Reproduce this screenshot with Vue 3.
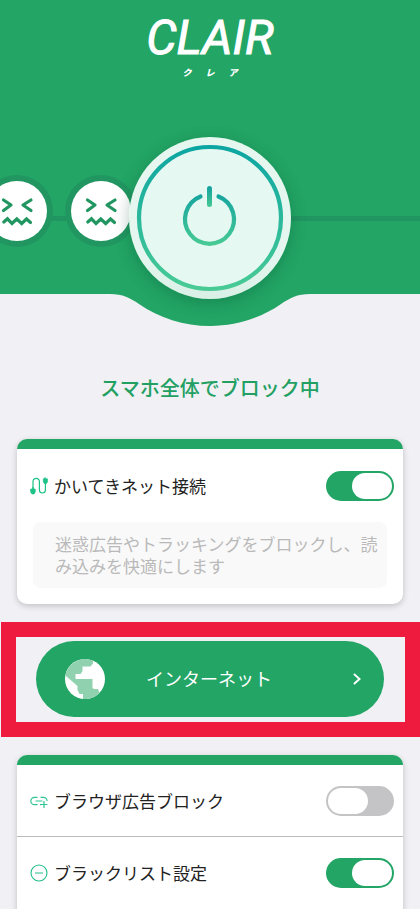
<script setup>
import { ref } from 'vue'

const comfort = ref(true)
const browserBlock = ref(false)
const blacklist = ref(true)
const kana = ['ク', 'レ', 'ア']
</script>

<template>
  <main class="screen">
    <header class="hero">
      <h1 class="logo">CLAIR</h1>
      <p class="kana"><span v-for="k in kana" :key="k">{{ k }}</span></p>

      <div class="stage">
        <div class="track"></div>
        <div class="faces">
          <svg v-for="n in 2" :key="n" class="face" viewBox="0 0 72 72" aria-hidden="true">
            <circle cx="36" cy="36" r="36" fill="#219661" />
            <circle cx="36" cy="36" r="30" fill="#fff" />
            <g fill="none" stroke="#219661" stroke-width="3.200" stroke-linecap="round" stroke-linejoin="round">
              <path d="M22.500 25l7.500 5-7.500 5.500M50 25l-8 5 8 5.500" />
              <path d="M22.800 47L26.500 43.800 31 48.500 35.800 44 40.700 48.500 45.500 44 49.500 47.500" stroke-linejoin="miter" />
            </g>
          </svg>
        </div>
        <button class="power" type="button" aria-label="電源">
          <svg viewBox="0 0 162 162" aria-hidden="true">
            <defs>
              <linearGradient id="ring" gradientUnits="userSpaceOnUse" x1="81" y1="8" x2="81" y2="154">
                <stop offset="0" stop-color="#0ba5a2" />
                <stop offset="1" stop-color="#4acb95" />
              </linearGradient>
              <linearGradient id="glyph" gradientUnits="userSpaceOnUse" x1="81" y1="55" x2="81" y2="108">
                <stop offset="0" stop-color="#14a3a0" />
                <stop offset="1" stop-color="#48ca94" />
              </linearGradient>
              <linearGradient id="bar" gradientUnits="userSpaceOnUse" x1="81" y1="50" x2="81" y2="70">
                <stop offset="0" stop-color="#14a3a0" />
                <stop offset="1" stop-color="#48c894" />
              </linearGradient>
            </defs>
            <circle cx="81" cy="81" r="71" fill="#e6f8f2" stroke="url(#ring)" stroke-width="4.200" />
            <path d="M71.500 59.500a24.500 24.500 0 1 0 18 0" fill="none" stroke="url(#glyph)" stroke-width="4.200" stroke-linecap="round" />
            <rect x="78" y="49" width="5" height="21" rx="2.500" fill="url(#bar)" />
          </svg>
        </button>
      </div>
    </header>

    <svg class="bump" viewBox="0 0 210 33" aria-hidden="true">
      <path d="M0 0V1H5C18 1 25 5 34 11C54 25 79 33 105 33C131 33 156 25 176 11C185 5 192 1 205 1H210V0Z" fill="#22a565" />
    </svg>

    <h2 class="status">スマホ全体でブロック中</h2>

    <section class="card">
      <div class="row">
        <svg class="icon" viewBox="0 0 18 18" fill="none" stroke="#1cc286" aria-hidden="true">
          <path d="M3 12V4.500a3.200 3.200 0 0 1 6.400 0V13a3 3 0 0 0 6 0V5" stroke-width="1.200" />
          <path d="M2.500 10.500h1v1.500h1.800v3l-1.200 2h-2.200l-1.300-2v-3h1.900zM14.500 .8h1v1h2v3.200l-1 1.500h-2.200l-1-1.500V1.800h1.200z" fill="#1cc286" stroke-width=".6" />
        </svg>
        <label for="comfort">かいてきネット接続</label>
        <input id="comfort" v-model="comfort" class="switch" type="checkbox" role="switch" />
      </div>
      <p class="note">迷惑広告やトラッキングをブロックし、読み込みを快適にします</p>
    </section>

    <div class="highlight">
      <button class="internet" type="button">
        <svg class="globe" viewBox="0 0 40 40" aria-hidden="true">
          <circle cx="20" cy="20" r="20" fill="#fff" />
          <path d="M.300 16.500A20 20 0 0 1 28 1.700V4.500L25.500 7.500H17.500V12L15.500 15H10.500V20H27.500V29L29 30H33L34.500 33.800A20 20 0 0 1 18 39.900V35H14.500L12.500 31V27Z" fill="#90d2b0" />
        </svg>
        <span>インターネット</span>
        <svg class="chevron" viewBox="0 0 8 12" fill="none" stroke="#fff" stroke-width="2" stroke-linecap="round" aria-hidden="true">
          <path d="M1.500 1.500L6.500 6l-5 4.500" />
        </svg>
      </button>
    </div>

    <section class="card">
      <div class="row compact">
        <svg class="icon" viewBox="0 0 18 18" fill="none" stroke="#2fc592" stroke-width="1.200" aria-hidden="true">
          <path d="M7.500 5.300H4.500a3.700 3.700 0 0 0 0 7.400h3M10.500 5.300h3A3.600 3.600 0 0 1 17.100 9M5.500 9h7M10 12.700h1M14 9v7M10.800 12.500h6.600" />
        </svg>
        <label for="browser">ブラウザ広告ブロック</label>
        <input id="browser" v-model="browserBlock" class="switch" type="checkbox" role="switch" />
      </div>
      <div class="row divided">
        <svg class="icon" viewBox="0 0 18 18" fill="none" stroke="#22bd89" stroke-width="1.100" aria-hidden="true">
          <circle cx="9" cy="9" r="8" />
          <path d="M5 9h8" />
        </svg>
        <label for="blacklist">ブラックリスト設定</label>
        <input id="blacklist" v-model="blacklist" class="switch" type="checkbox" role="switch" />
      </div>
    </section>
  </main>
</template>

<style>
body {
  margin: 0;
  background: #f0f0f5;
}
</style>

<style scoped>
* {
  box-sizing: border-box;
}
.screen {
  height: 100vh;
  overflow: hidden auto;
  scrollbar-width: none;
  display: flex;
  flex-direction: column;
  background: #f0f0f5;
  color: #222;
  font-family: "Noto Sans CJK JP", sans-serif;
}
.screen > * {
  flex-shrink: 0;
}
h1,
h2,
p {
  margin: 0;
}
button {
  border: 0;
  padding: 0;
  font: inherit;
  cursor: pointer;
}
svg {
  display: block;
}
.hero {
  background: #22a565;
  color: #fff;
  padding-top: 10px;
  position: relative;
}
.logo {
  font: italic 400 48px/56px Roboto, sans-serif;
  text-align: center;
  -webkit-text-stroke: 1px #fff;
}
.kana {
  display: flex;
  justify-content: center;
  gap: 14px;
  font-size: 9px;
  font-weight: 900;
  font-style: italic;
  line-height: 14px;
}
.stage {
  display: grid;
  margin-top: 57px;
  margin-bottom: -5px;
}
.stage > * {
  grid-area: 1 / 1;
}
.track {
  align-self: center;
  height: 5px;
  background: #219561;
}
.faces {
  width: 50%;
  display: flex;
  justify-content: flex-end;
  gap: 12px;
  padding: 38px 73px 0 0;
  overflow: hidden;
}
.face {
  flex: none;
  width: 72px;
  height: 72px;
}
.power {
  justify-self: center;
  width: 162px;
  height: 162px;
  border-radius: 50%;
  background: linear-gradient(#e6f7f0, #e4f6ef 75%, #d9f0e6);
  box-shadow: 0 4px 16px rgba(0, 70, 40, 0.3);
}
.power svg {
  width: 100%;
  height: 100%;
}
.bump {
  align-self: center;
  width: 210px;
  height: 33px;
  margin-top: -1px;
}
.status {
  margin: 47px 0 36px;
  text-align: center;
  color: #22a062;
  font-size: 20px;
  font-weight: 500;
  line-height: 30px;
}
.card {
  margin: 0 17px;
  padding-bottom: 16px;
  background: #fff;
  border-radius: 10px;
  box-shadow: 0 2px 6px rgba(0, 0, 0, 0.2);
  overflow: hidden;
}
.card::before {
  content: "";
  display: block;
  height: 10px;
  background: #22a565;
}
.row {
  display: flex;
  align-items: center;
  height: 73px;
  padding: 0 9px 0 13px;
}
.compact {
  height: 71px;
}
.divided {
  border-top: 1px solid #bbb;
}
.icon {
  flex: none;
  width: 18px;
  height: 18px;
  margin-right: 6px;
}
.row label {
  flex: 1;
  font-size: 17px;
  line-height: 24px;
}
.switch {
  appearance: none;
  flex: none;
  width: 68px;
  height: 30px;
  margin: 0;
  padding: 2px;
  border-radius: 15px;
  background: #c4c4c6;
  display: flex;
  cursor: pointer;
}
.switch::before {
  content: "";
  width: 40px;
  height: 26px;
  border-radius: 13px;
  background: #fff;
}
.switch:checked {
  background: #22a565;
  justify-content: flex-end;
}
.note {
  margin: 0 16px;
  padding: 11px 4px 11px 22px;
  border-radius: 8px;
  background: #f9f9f9;
  color: #b9b9b9;
  font-size: 17px;
  line-height: 22px;
}
.highlight {
  margin: 18px 0 18px 1px;
  border: 15px solid #ee1b3e;
  padding: 4px 21px 5px 20px;
}
.internet {
  display: grid;
  grid-template-columns: 40px 1fr 48px;
  align-items: center;
  width: 100%;
  height: 76px;
  padding: 0 23px 0 29px;
  border-radius: 38px;
  background: #22a565;
  color: #fff;
  font-size: 18px;
}
.globe {
  width: 40px;
  height: 40px;
}
.internet span {
  font-weight: 400;
  line-height: 24px;
  padding-bottom: 2px;
  text-align: center;
}
.chevron {
  justify-self: end;
  width: 8px;
  height: 12px;
}
</style>
